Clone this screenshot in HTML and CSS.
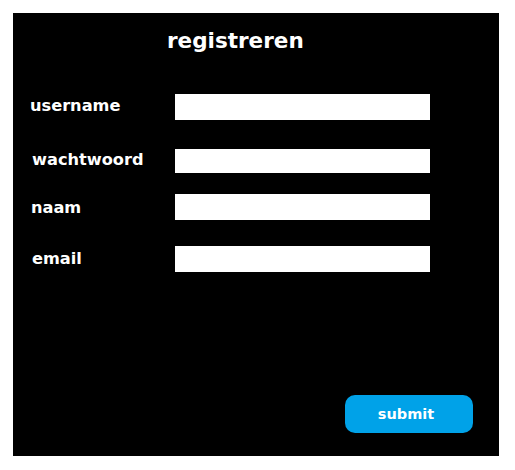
FILE: index.html
```html
<!DOCTYPE html>
<html lang="nl">
<head>
<meta charset="utf-8">
<title>registreren</title>
<link rel="stylesheet" href="styles.css">
</head>
<body>
<form class="panel">
  <h1 class="title">registreren</h1>
  <div class="fields">
    <div class="row row-user">
      <label class="label" for="username">username</label>
      <input class="input" id="username" type="text">
    </div>
    <div class="row row-pass">
      <label class="label" for="wachtwoord">wachtwoord</label>
      <input class="input input-short" id="wachtwoord" type="password">
    </div>
    <div class="row row-naam">
      <label class="label" for="naam">naam</label>
      <input class="input" id="naam" type="text">
    </div>
    <div class="row row-email">
      <label class="label" for="email">email</label>
      <input class="input" id="email" type="email">
    </div>
  </div>
  <div class="actions">
    <button class="submit" type="submit">submit</button>
  </div>
</form>
</body>
</html>
```

FILE: styles.css
```css
html, body {
  background: #ffffff;
}

body {
  margin: 13px;
  font-family: "DejaVu Sans", Verdana, sans-serif;
}

.panel {
  box-sizing: border-box;
  width: 486px;
  height: 443px;
  background: #000000;
  display: flex;
  flex-direction: column;
  padding: 16px 26px 23px 17px;
}

.title {
  margin: 0 0 0 137px;
  font-size: 21.5px;
  line-height: 24px;
  font-weight: bold;
  color: #ffffff;
}

.fields {
  display: flex;
  flex-direction: column;
  margin-top: 41px;
}

.row {
  display: flex;
  align-items: flex-start;
}

.row-pass {
  margin-top: 29px;
}

.row-naam {
  margin-top: 21px;
}

.row-email {
  margin-top: 26px;
}

.label {
  width: 145px;
  flex: none;
  font-size: 16.2px;
  line-height: 20px;
  font-weight: bold;
  color: #ffffff;
  padding-left: 1px;
}

.row-user .label {
  margin-top: 2px;
  padding-left: 0;
}

.row-pass .label {
  margin-top: 1px;
  padding-left: 2px;
  width: 143px;
}

.row-naam .label {
  margin-top: 4px;
  width: 144px;
}

.row-email .label {
  margin-top: 3px;
  padding-left: 2px;
  width: 143px;
}

.input {
  box-sizing: border-box;
  width: 255px;
  height: 26px;
  border: none;
  background: #ffffff;
  margin: 0;
  padding: 0;
}

.input-short {
  height: 24px;
}

.actions {
  margin-top: auto;
  display: flex;
  justify-content: flex-end;
}

.submit {
  width: 128px;
  height: 38px;
  border: none;
  border-radius: 10px;
  background: #00a2e8;
  color: #ffffff;
  font-family: "DejaVu Sans", Verdana, sans-serif;
  font-weight: bold;
  font-size: 14.5px;
  padding: 0 6px 0 0;
}
```
